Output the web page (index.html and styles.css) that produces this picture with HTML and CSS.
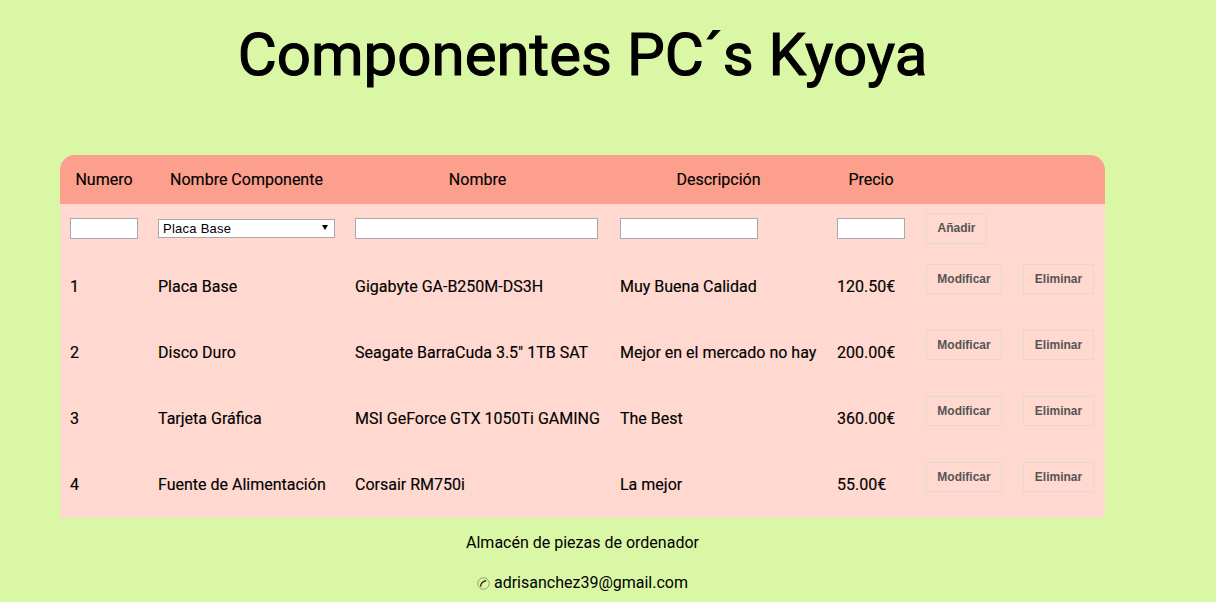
FILE: index.html
```html
<!DOCTYPE html>
<html lang="es">
<head>
    <meta charset="UTF-8">
    <meta name="viewport" content="width=device-width, initial-scale=1.0">
    <title>Componentes PC´s Kyoya</title>
    <link rel="stylesheet" href="styles.css">
</head>
<body>

<div class="container">
    <h1>Componentes PC´s Kyoya</h1>

    <table>
        <tr>
            <th class="col-num">Numero</th>
            <th class="col-comp">Nombre Componente</th>
            <th class="col-name">Nombre</th>
            <th class="col-desc">Descripción</th>
            <th class="col-price">Precio</th>
            <th class="col-mod"></th>
            <th class="col-del"></th>
        </tr>
        <tr class="add-row">
            <td><input type="text" class="input-small"></td>
            <td>
                <select>
                    <option>Placa Base</option>
                    <option>Disco Duro</option>
                    <option>Tarjeta Gráfica</option>
                    <option>Fuente de Alimentación</option>
                </select>
            </td>
            <td><input type="text" class="input-name"></td>
            <td><input type="text" class="input-desc"></td>
            <td><input type="text" class="input-small"></td>
            <td><button type="button" class="btn-add">Añadir</button></td>
            <td></td>
        </tr>
        <tr>
            <td>1</td>
            <td>Placa Base</td>
            <td>Gigabyte GA-B250M-DS3H</td>
            <td>Muy Buena Calidad</td>
            <td>120.50€</td>
            <td class="cell-btn"><button type="button">Modificar</button></td>
            <td class="cell-btn"><button type="button">Eliminar</button></td>
        </tr>
        <tr>
            <td>2</td>
            <td>Disco Duro</td>
            <td>Seagate BarraCuda 3.5" 1TB SAT</td>
            <td>Mejor en el mercado no hay</td>
            <td>200.00€</td>
            <td class="cell-btn"><button type="button">Modificar</button></td>
            <td class="cell-btn"><button type="button">Eliminar</button></td>
        </tr>
        <tr>
            <td>3</td>
            <td>Tarjeta Gráfica</td>
            <td>MSI GeForce GTX 1050Ti GAMING</td>
            <td>The Best</td>
            <td>360.00€</td>
            <td class="cell-btn"><button type="button">Modificar</button></td>
            <td class="cell-btn"><button type="button">Eliminar</button></td>
        </tr>
        <tr>
            <td>4</td>
            <td>Fuente de Alimentación</td>
            <td>Corsair RM750i</td>
            <td>La mejor</td>
            <td>55.00€</td>
            <td class="cell-btn"><button type="button">Modificar</button></td>
            <td class="cell-btn"><button type="button">Eliminar</button></td>
        </tr>
    </table>

    <footer>
        <p>Almacén de piezas de ordenador</p>
        <p class="contact">
            <svg class="phone" width="13" height="13" viewBox="0 0 13 13" aria-hidden="true">
                <circle cx="6.5" cy="6.5" r="5.7" fill="none" stroke="#8a8f70" stroke-width="0.9"/>
                <path d="M3.6 9.6 C3.8 6.6 6 4.2 9.2 3.6" fill="none" stroke="#1c1c14" stroke-width="1.3"/>
            </svg>
            adrisanchez39@gmail.com
        </p>
    </footer>
</div>

</body>
</html>
```

FILE: styles.css
```css
body {
    margin: 0;
    background-color: #daf7a6;
    color: #000;
    font-family: Roboto, Arial, sans-serif;
    font-size: 16px;
    -webkit-text-stroke: 0.15px #000;
}

.container {
    width: 1165px;
}

h1 {
    margin: 0;
    padding-top: 17px;
    height: 155px;
    box-sizing: border-box;
    font-size: 60px;
    font-weight: 400;
    line-height: 75px;
    text-align: center;
    -webkit-text-stroke: 1.1px #000;
}

table {
    width: 1045px;
    margin-left: 60px;
    border-collapse: separate;
    border-spacing: 0;
    table-layout: fixed;
    background-color: #ffd8d0;
    border-radius: 15px 15px 0 0;
}

th {
    height: 49px;
    padding: 0 10px;
    background-color: #fc9f8c;
    font-weight: 400;
    text-align: center;
}

th:first-child {
    border-top-left-radius: 15px;
}

th:last-child {
    border-top-right-radius: 15px;
}

td {
    height: 66px;
    padding: 0 10px 2px;
    white-space: nowrap;
}

.col-num { width: 88px; }
.col-comp { width: 197px; }
.col-name { width: 265px; }
.col-desc { width: 217px; }
.col-price { width: 88px; }
.col-mod { width: 97px; }
.col-del { width: 93px; }

th, td {
    box-sizing: border-box;
}

.add-row td {
    height: 50px;
}

.cell-btn {
    vertical-align: top;
    padding-top: 10px;
}

input[type="text"] {
    display: block;
    box-sizing: border-box;
    height: 21px;
    padding: 1px 2px;
    border: 1px solid #a9a9a9;
    background-color: #fff;
}

.input-small {
    width: 68px;
}

.input-name {
    width: 243px;
}

.input-desc {
    width: 138px;
}

select {
    display: block;
    box-sizing: border-box;
    width: 177px;
    height: 19px;
    padding: 0 0 0 4px;
    border: 1px solid #a9a9a9;
    border-radius: 0;
    background: #fff url("data:image/svg+xml,%3Csvg xmlns='http://www.w3.org/2000/svg' width='6' height='5'%3E%3Cpolygon points='0,0 6,0 3,5'/%3E%3C/svg%3E") no-repeat 163px 5px;
    color: #000;
    font-family: Arial, "Liberation Sans", sans-serif;
    font-size: 13px;
    letter-spacing: 0.25px;
    appearance: none;
    -webkit-appearance: none;
    -webkit-text-stroke: 0;
}

button {
    display: block;
    box-sizing: border-box;
    width: 76px;
    height: 30px;
    margin-left: 1px;
    padding: 0;
    border: 1px solid #e2d8d6;
    background-color: transparent;
    color: #555;
    font-family: Arial, "Liberation Sans", sans-serif;
    font-size: 12px;
    font-weight: 700;
    -webkit-text-stroke: 0;
}

.cell-btn:last-child button {
    width: 71px;
}

.btn-add {
    width: 61px;
    height: 31px;
}

footer {
    text-align: center;
    -webkit-text-stroke: 0;
}

footer p {
    margin: 0;
    height: 41px;
    line-height: 41px;
}

footer p:first-child {
    margin-top: 4px;
}

.contact {
    line-height: 39px;
}

.phone {
    vertical-align: -2px;
}
```
